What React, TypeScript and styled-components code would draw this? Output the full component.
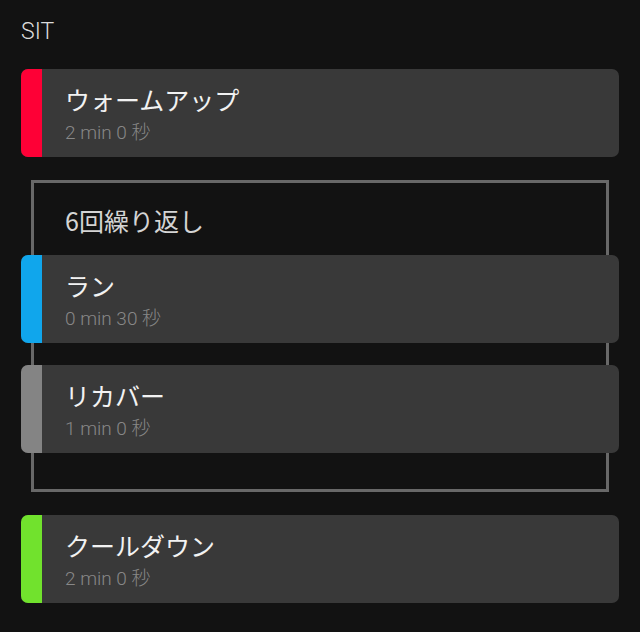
import React from "react";
import styled, { createGlobalStyle } from "styled-components";

interface StepType {
  name: string;
  duration: string;
  color: string;
}

interface BlockType {
  repeat?: number;
  steps: StepType[];
}

const WorkoutData: BlockType[] = [
  { steps: [{ name: "ウォームアップ", duration: "2 min 0 秒", color: "#fe0036" }] },
  {
    repeat: 6,
    steps: [
      { name: "ラン", duration: "0 min 30 秒", color: "#10a6ec" },
      { name: "リカバー", duration: "1 min 0 秒", color: "#848484" },
    ],
  },
  { steps: [{ name: "クールダウン", duration: "2 min 0 秒", color: "#71e22d" }] },
];

const StepCard: React.FC<StepType> = ({ name, duration, color }) => (
  <S.Card>
    <S.ColorBar $color={color} />
    <S.CardBody>
      <S.StepName>{name}</S.StepName>
      <S.StepDuration>{duration}</S.StepDuration>
    </S.CardBody>
  </S.Card>
);

const App: React.FC = () => {
  return (
    <>
      <GlobalStyle />
      <S.Page>
        <S.Title>SIT</S.Title>
        <S.List>
          {WorkoutData.map((block, i) =>
            block.repeat ? (
              <S.RepeatGroup key={i}>
                <S.RepeatLabel>{block.repeat}回繰り返し</S.RepeatLabel>
                <S.RepeatSteps>
                  {block.steps.map((step) => (
                    <StepCard key={step.name} {...step} />
                  ))}
                </S.RepeatSteps>
              </S.RepeatGroup>
            ) : (
              block.steps.map((step) => <StepCard key={step.name} {...step} />)
            )
          )}
        </S.List>
      </S.Page>
    </>
  );
};

const GlobalStyle = createGlobalStyle`
  html, body {
    margin: 0;
    background: #121212;
  }
  body {
    font-family: Roboto, "Noto Sans CJK JP", sans-serif;
  }
`;

const S = {
  Page: styled.div`
    width: 640px;
    height: 632px;
    box-sizing: border-box;
    padding: 17px 21px 0;
    background: #121212;
    overflow: hidden;
  `,
  Title: styled.div`
    font-size: 23px;
    line-height: 30px;
    font-weight: 300;
    color: #dcdcdc;
  `,
  List: styled.div`
    display: flex;
    flex-direction: column;
    gap: 23px;
    margin-top: 22px;
  `,
  Card: styled.div`
    display: flex;
    height: 88px;
    border-radius: 7px;
    overflow: hidden;
    background: #393939;
  `,
  ColorBar: styled.div<{ $color: string }>`
    width: 21px;
    flex-shrink: 0;
    background: ${({ $color }) => $color};
  `,
  CardBody: styled.div`
    display: flex;
    flex-direction: column;
    padding: 15px 0 0 23px;
  `,
  StepName: styled.div`
    font-family: "Noto Sans CJK JP", sans-serif;
    font-size: 25px;
    line-height: 30px;
    color: #f2f2f2;
  `,
  StepDuration: styled.div`
    margin-top: 8px;
    font-size: 19px;
    line-height: 22px;
    font-weight: 300;
    color: #888888;
  `,
  RepeatGroup: styled.div`
    margin: 0 10px;
    border: 3px solid #686868;
    padding-bottom: 36px;
  `,
  RepeatLabel: styled.div`
    font-family: "Noto Sans CJK JP", sans-serif;
    padding: 22px 0 20px 31px;
    font-size: 25px;
    line-height: 30px;
    color: #d4d4d4;
  `,
  RepeatSteps: styled.div`
    display: flex;
    flex-direction: column;
    gap: 22px;
    margin: 0 -13px;
  `,
};

export default App;
